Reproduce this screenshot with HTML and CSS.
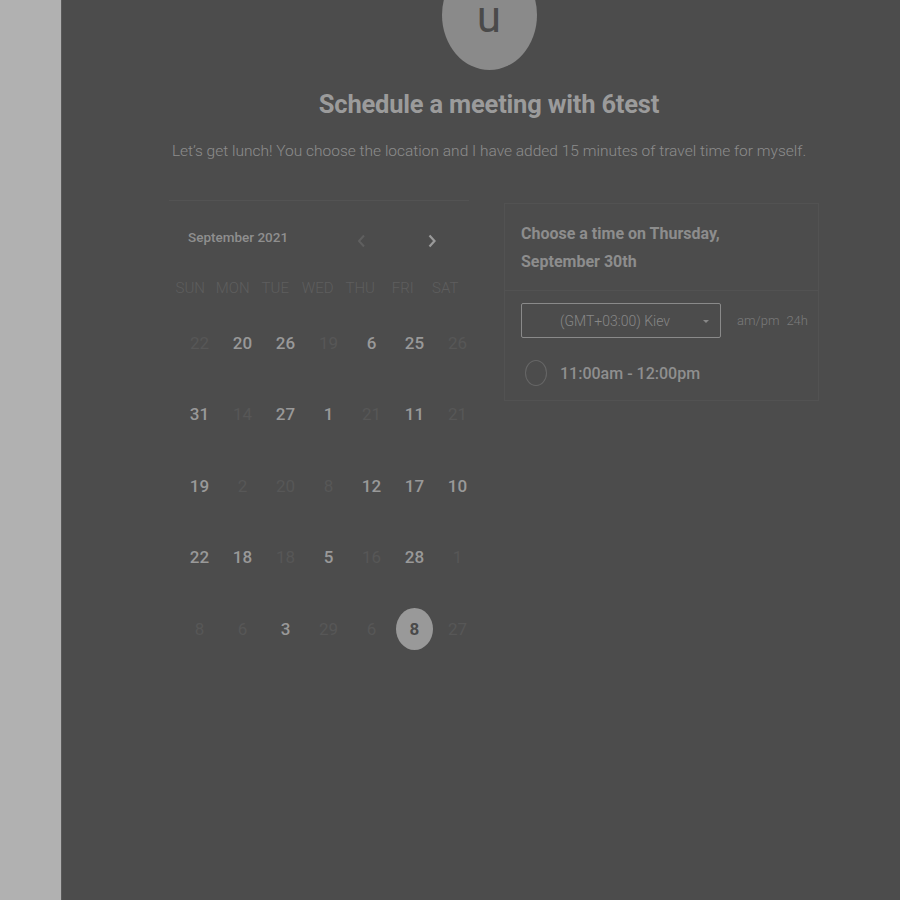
FILE: index.html
```html
<!DOCTYPE html>
<html>
<head>
<meta charset="utf-8">
<link rel="stylesheet" href="styles.css">
</head>
<body>
<div class="page">
  <div class="side"></div>
  <div class="main">
    <div class="content">
      <div class="avatar"><span>u</span></div>
      <h1 class="title">Schedule a meeting with 6test</h1>
      <p class="subtitle">Let’s get lunch! You choose the location and I have added 15 minutes of travel time for myself.</p>
      <div class="booking">
        <div class="calendar">
          <div class="cal-head">
            <div class="month">September 2021</div>
            <button class="nav prev"><svg width="10" height="14" viewBox="0 0 10 14"><polyline points="7,1.5 2,7 7,12.5" fill="none" stroke="currentColor" stroke-width="2"/></svg></button>
            <button class="nav next"><svg width="10" height="14" viewBox="0 0 10 14"><polyline points="2.5,1.5 7.5,7 2.5,12.5" fill="none" stroke="currentColor" stroke-width="2.2"/></svg></button>
          </div>
          <div class="weekdays">
            <span>SUN</span><span>MON</span><span>TUE</span><span>WED</span><span>THU</span><span>FRI</span><span>SAT</span>
          </div>
          <div class="days">
            <span class="off">22</span><span class="on">20</span><span class="on">26</span><span class="off">19</span><span class="on">6</span><span class="on">25</span><span class="off">26</span>
            <span class="on">31</span><span class="off">14</span><span class="on">27</span><span class="on">1</span><span class="off">21</span><span class="on">11</span><span class="off">21</span>
            <span class="on">19</span><span class="off">2</span><span class="off">20</span><span class="off">8</span><span class="on">12</span><span class="on">17</span><span class="on">10</span>
            <span class="on">22</span><span class="on">18</span><span class="off">18</span><span class="on">5</span><span class="off">16</span><span class="on">28</span><span class="off">1</span>
            <span class="off">8</span><span class="off">6</span><span class="on">3</span><span class="off">29</span><span class="off">6</span><span class="sel"><b>8</b></span><span class="off">27</span>
          </div>
        </div>
        <div class="times">
          <div class="times-head">Choose a time on Thursday,<br>September 30th</div>
          <div class="tz-row">
            <div class="tz-select"><span>(GMT+03:00) Kiev</span><i class="caret"></i></div>
            <div class="fmt"><span>am/pm</span><span>24h</span></div>
          </div>
          <div class="slot"><span class="radio"></span><span class="slot-text">11:00am - 12:00pm</span></div>
        </div>
      </div>
    </div>
  </div>
</div>
</body>
</html>
```
FILE: styles.css
```css
* { box-sizing: border-box; }
html, body { margin: 0; padding: 0; }
body { font-family: Roboto, "Liberation Sans", Arial, sans-serif; background: #4c4c4c; }
.page { display: flex; width: 900px; height: 900px; overflow: hidden; }
.side { width: 61px; flex-shrink: 0; background: #b1b1b1; }
.main { flex: 1; background: #4c4c4c; border-left: 1px solid #5a5a5a; }
.content { width: 640px; margin-left: 107px; }
.avatar { width: 95px; height: 110px; margin: -40px auto 0; border-radius: 50%; background: #8a8a8a; display: flex; justify-content: center; padding-top: 35px; }
.avatar span { font-size: 44px; line-height: 1; color: #4a4a4a; font-weight: 400; }
.title { margin: 19px 0 0; font-size: 25.5px; line-height: 30px; font-weight: 700; text-align: center; color: #9b9b9b; letter-spacing: -0.2px; }
.subtitle { margin: 20px 0 0; font-size: 15.5px; line-height: 24px; font-weight: 300; text-align: center; color: #8c8c8c; white-space: nowrap; }
.booking { display: flex; margin-top: 37px; }
.calendar { width: 300px; flex-shrink: 0; border-top: 1px solid #535353; }
.cal-head { display: flex; align-items: center; height: 72px; padding-left: 19px; }
.month { width: 165px; font-size: 13.5px; font-weight: 500; color: #8f8f8f; }
.nav { width: 18px; height: 20px; padding: 0; border: 0; background: none; display: flex; align-items: center; justify-content: center; margin-top: 8px; }
.prev { color: #5f5f5f; }
.next { color: #9a9a9a; margin-left: 52px; }
.weekdays { display: grid; grid-template-columns: repeat(7, 42.5px); height: 30px; align-items: center; }
.weekdays span { text-align: center; font-size: 15px; font-weight: 300; color: #5e5e5e; }
.days { display: grid; grid-template-columns: repeat(7, 43px); grid-auto-rows: 71.5px; margin: 4px 0 0 9px; align-items: center; justify-items: center; }
.days span { font-size: 17px; font-weight: 500; }
.days .on { color: #999999; }
.days .off { color: #575757; font-weight: 400; }
.days .sel { width: 37px; height: 42px; border-radius: 50%; background: #999999; display: flex; align-items: center; justify-content: center; }
.days .sel b { color: #4a4a4a; font-weight: 700; }
.times { width: 315px; flex-shrink: 0; margin: 3px 0 0 35px; border: 1px solid #525252; align-self: flex-start; }
.times-head { padding: 16px 15px 14px 16px; font-size: 16px; line-height: 28px; font-weight: 700; color: #8d8d8d; border-bottom: 1px solid #525252; }
.tz-row { display: flex; align-items: center; margin-top: 12px; padding-left: 16px; }
.tz-select { width: 200px; height: 35px; border: 1px solid #8a8a8a; border-radius: 2px; display: flex; align-items: center; padding-left: 38px; position: relative; }
.tz-select span { font-size: 14px; font-weight: 300; color: #878787; }
.caret { position: absolute; right: 11px; top: 16px; width: 0; height: 0; border-left: 3px solid transparent; border-right: 3px solid transparent; border-top: 3px solid #888; }
.fmt { display: flex; gap: 7px; margin-left: 16px; font-size: 13px; font-weight: 300; color: #7b7b7b; }
.slot { display: flex; align-items: center; margin-top: 22px; padding: 0 0 14px 20px; }
.radio { width: 22px; height: 26px; border-radius: 50%; border: 1px solid #666; }
.slot-text { margin-left: 13px; font-size: 16px; font-weight: 500; color: #8f8f8f; }
```
